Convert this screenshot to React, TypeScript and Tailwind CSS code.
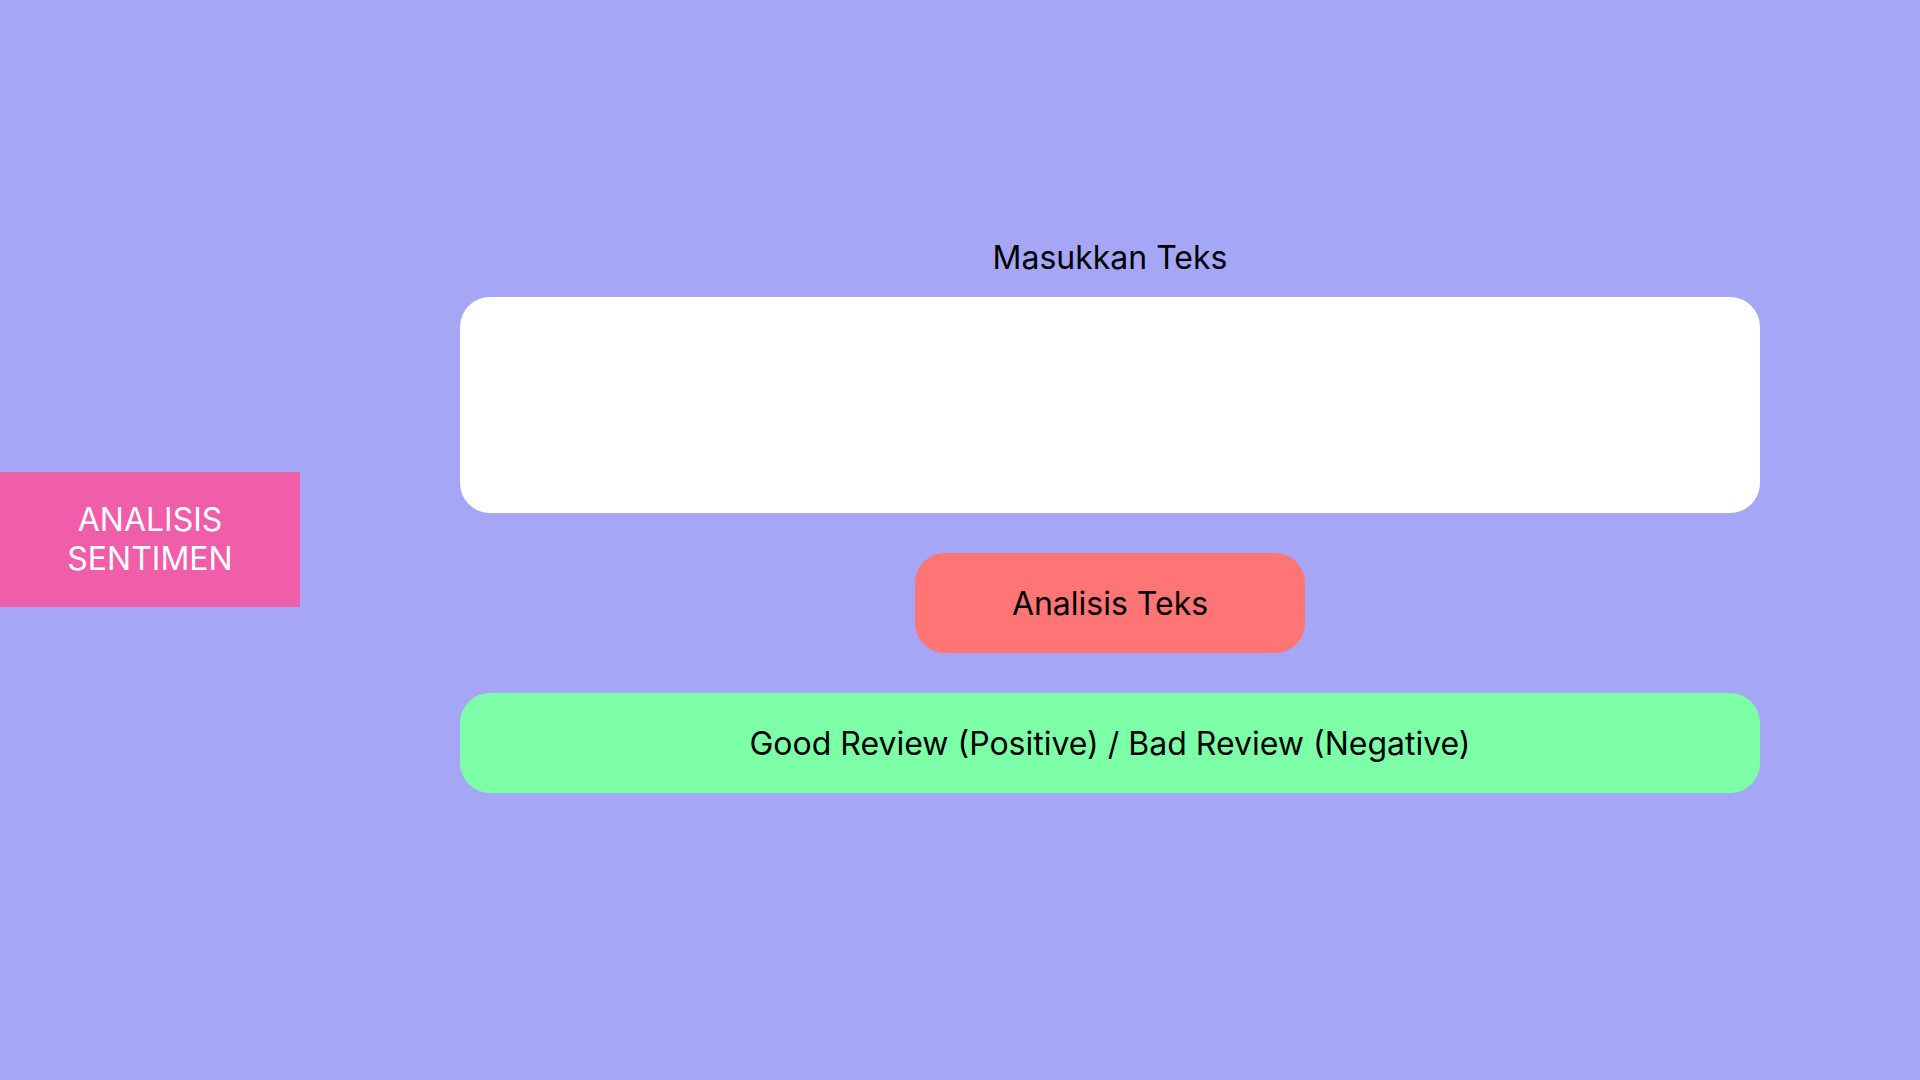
export default function App() {
  return (
    <div className="flex min-h-screen items-center bg-[#a5a6f6] font-['Inter',sans-serif] text-[32px] leading-[39px] text-black">
      <aside className="w-[300px] shrink-0 pb-px">
        <h1 className="bg-[#f05da8] pt-7 pb-[29px] text-center text-white">
          ANALISIS
          <br />
          SENTIMEN
        </h1>
      </aside>
      <main className="mx-40 flex flex-1 flex-col items-center pb-[49px]">
        <label htmlFor="teks">Masukkan Teks</label>
        <textarea
          id="teks"
          className="mt-5 block h-[216px] w-full resize-none rounded-[30px] bg-white px-8 py-6 outline-none"
        />
        <button type="button" className="mt-10 h-[100px] w-[390px] rounded-[30px] bg-[#ff7575]">
          Analisis Teks
        </button>
        <output
          htmlFor="teks"
          className="mt-10 flex h-[100px] w-full items-center justify-center rounded-[30px] bg-[#7dffa8]"
        >
          Good Review (Positive) / Bad Review (Negative)
        </output>
      </main>
    </div>
  );
}
